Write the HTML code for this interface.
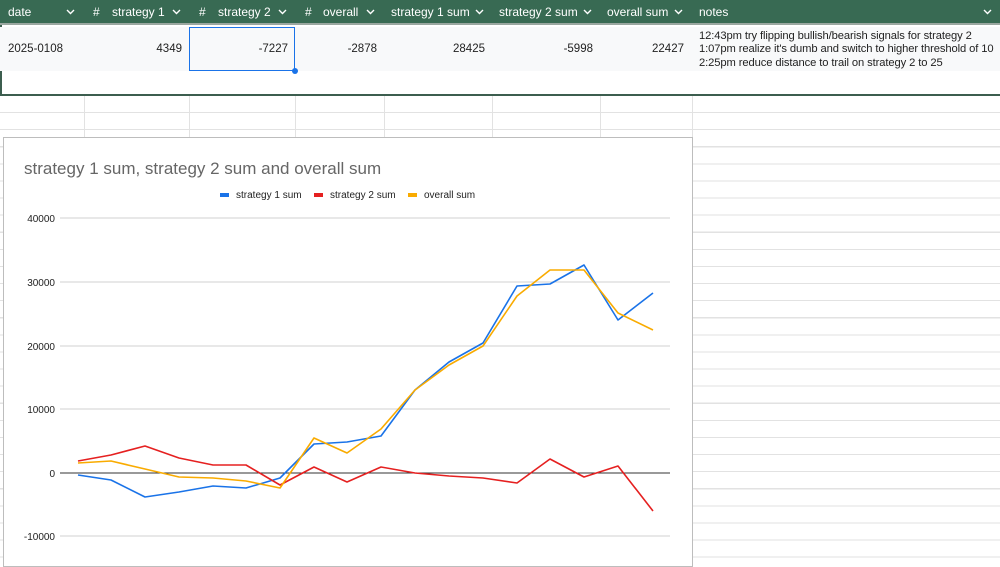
<!DOCTYPE html>
<html><head><meta charset="utf-8"><style>
*{margin:0;padding:0;box-sizing:border-box}
body{width:1000px;height:564px;overflow:hidden;background:#fff;font-family:"Liberation Sans",Arial,sans-serif;position:relative}
.hdr{position:absolute;left:0;top:0;width:1000px;height:25px;background:#386a53;border-bottom:2px solid #9aa7a0;color:#fff;font-size:12px}
.hdr span{position:absolute;top:5px;white-space:nowrap}
.hdr svg{position:absolute;top:9px}
.row{position:absolute;left:0;top:27px;width:1000px;height:44px;background:#f8f9fa;font-size:11.5px;color:#222}
.row span{position:absolute;top:16px}
.grid{position:absolute;left:0;top:96px;width:1000px;height:468px;background:repeating-linear-gradient(to bottom,#fff 0,#fff 16px,#e2e2e2 16px,#e2e2e2 17.1px)}
.v{position:absolute;top:96px;width:1px;height:41px;background:#e2e2e2}
</style></head><body>
<div class="grid"></div>
<div style="position:absolute;left:0;top:72px;width:1000px;height:24px;background:#fff"></div>
<div style="position:absolute;left:0;top:94px;width:1000px;height:1.5px;background:#3c5e4f"></div>
<div style="position:absolute;left:0;top:25px;width:2px;height:70px;background:#3c5e4f"></div>
<div class="v" style="left:84px"></div><div class="v" style="left:189px"></div><div class="v" style="left:295px"></div><div class="v" style="left:384px"></div><div class="v" style="left:492px"></div><div class="v" style="left:600px"></div><div class="v" style="left:692px"></div>
<div class="hdr">
<span style="left:8px">date</span>
<span style="left:93px">#</span><span style="left:112px">strategy 1</span>
<span style="left:199px">#</span><span style="left:218px">strategy 2</span>
<span style="left:305px">#</span><span style="left:323px">overall</span>
<span style="left:391px">strategy 1 sum</span>
<span style="left:499px">strategy 2 sum</span>
<span style="left:607px">overall sum</span>
<span style="left:699px">notes</span>
<svg style="left:66px" width="9" height="6"><polyline points="1,1 4.5,4.5 8,1" fill="none" stroke="#fff" stroke-width="1.4"/></svg>
<svg style="left:172px" width="9" height="6"><polyline points="1,1 4.5,4.5 8,1" fill="none" stroke="#fff" stroke-width="1.4"/></svg>
<svg style="left:278px" width="9" height="6"><polyline points="1,1 4.5,4.5 8,1" fill="none" stroke="#fff" stroke-width="1.4"/></svg>
<svg style="left:366px" width="9" height="6"><polyline points="1,1 4.5,4.5 8,1" fill="none" stroke="#fff" stroke-width="1.4"/></svg>
<svg style="left:475px" width="9" height="6"><polyline points="1,1 4.5,4.5 8,1" fill="none" stroke="#fff" stroke-width="1.4"/></svg>
<svg style="left:583px" width="9" height="6"><polyline points="1,1 4.5,4.5 8,1" fill="none" stroke="#fff" stroke-width="1.4"/></svg>
<svg style="left:674px" width="9" height="6"><polyline points="1,1 4.5,4.5 8,1" fill="none" stroke="#fff" stroke-width="1.4"/></svg>
<svg style="left:983px" width="9" height="6"><polyline points="1,1 4.5,4.5 8,1" fill="none" stroke="#fff" stroke-width="1.4"/></svg>
</div>
<div class="row">
<span style="left:8px">2025-0108</span>
<span style="right:818px">4349</span>
<span style="right:712px">-7227</span>
<span style="right:623px">-2878</span>
<span style="right:515px">28425</span>
<span style="right:407px">-5998</span>
<span style="right:316px">22427</span>
<span style="left:699px;top:3px;line-height:13.3px;white-space:nowrap;font-size:11.2px;letter-spacing:-0.1px">12:43pm try flipping bullish/bearish signals for strategy 2<br>1:07pm realize it's dumb and switch to higher threshold of 10<br>2:25pm reduce distance to trail on strategy 2 to 25</span>
</div>
<div style="position:absolute;left:189px;top:27px;width:106px;height:44px;border:1.5px solid #1a73e8"></div>
<div style="position:absolute;left:292px;top:68px;width:6px;height:6px;border-radius:50%;background:#1a73e8"></div>
<div style="position:absolute;left:3px;top:137px;width:690px;height:430px;background:#fff;border:1.5px solid #bdbdbd"></div>
<svg style="position:absolute;left:0;top:0" width="1000" height="564" font-family="Liberation Sans,Arial,sans-serif">
<text x="24" y="174" font-size="17" fill="#666">strategy 1 sum, strategy 2 sum and overall sum</text>
<rect x="220" y="193" width="9" height="4" fill="#1a73e8"/><text x="236" y="198" font-size="10" fill="#222">strategy 1 sum</text>
<rect x="314" y="193" width="9" height="4" fill="#e52020"/><text x="330" y="198" font-size="10" fill="#222">strategy 2 sum</text>
<rect x="408" y="193" width="9" height="4" fill="#f9ab00"/><text x="424" y="198" font-size="10" fill="#222">overall sum</text>
<g stroke="#dadada" stroke-width="1.2">
<line x1="60" x2="670" y1="218" y2="218"/><line x1="60" x2="670" y1="282" y2="282"/><line x1="60" x2="670" y1="346" y2="346"/><line x1="60" x2="670" y1="409" y2="409"/><line x1="60" x2="670" y1="536" y2="536"/>
</g>
<line x1="60" x2="670" y1="473" y2="473" stroke="#333" stroke-width="1"/>
<g font-size="10" fill="#222" text-anchor="end">
<text x="55" y="222">40000</text><text x="55" y="286">30000</text><text x="55" y="350">20000</text><text x="55" y="413">10000</text><text x="55" y="477">0</text><text x="55" y="540">-10000</text>
</g>
<g fill="none" stroke-width="1.6" stroke-linejoin="round">
<polyline stroke="#1a73e8" points="78,475 111,480 145,497 179,492 213,486 246,488 280,478 314,444 347,442 381,436 415,390 449,362 483,343 517,286 550,284 584,265 618,320 653,293"/>
<polyline stroke="#e52020" points="78,461 111,455 145,446 179,458 213,465 246,465 280,485 314,467 347,482 381,467 415,473 449,476 483,478 517,483 550,459 584,477 618,466 653,511"/>
<polyline stroke="#f9ab00" points="78,463 111,461 145,469 179,477 213,478 246,481 280,488 314,438 347,453 381,429 415,390 449,365 483,346 517,296 550,270 584,270 618,313 653,330"/>
</g>
</svg>
</body></html>
